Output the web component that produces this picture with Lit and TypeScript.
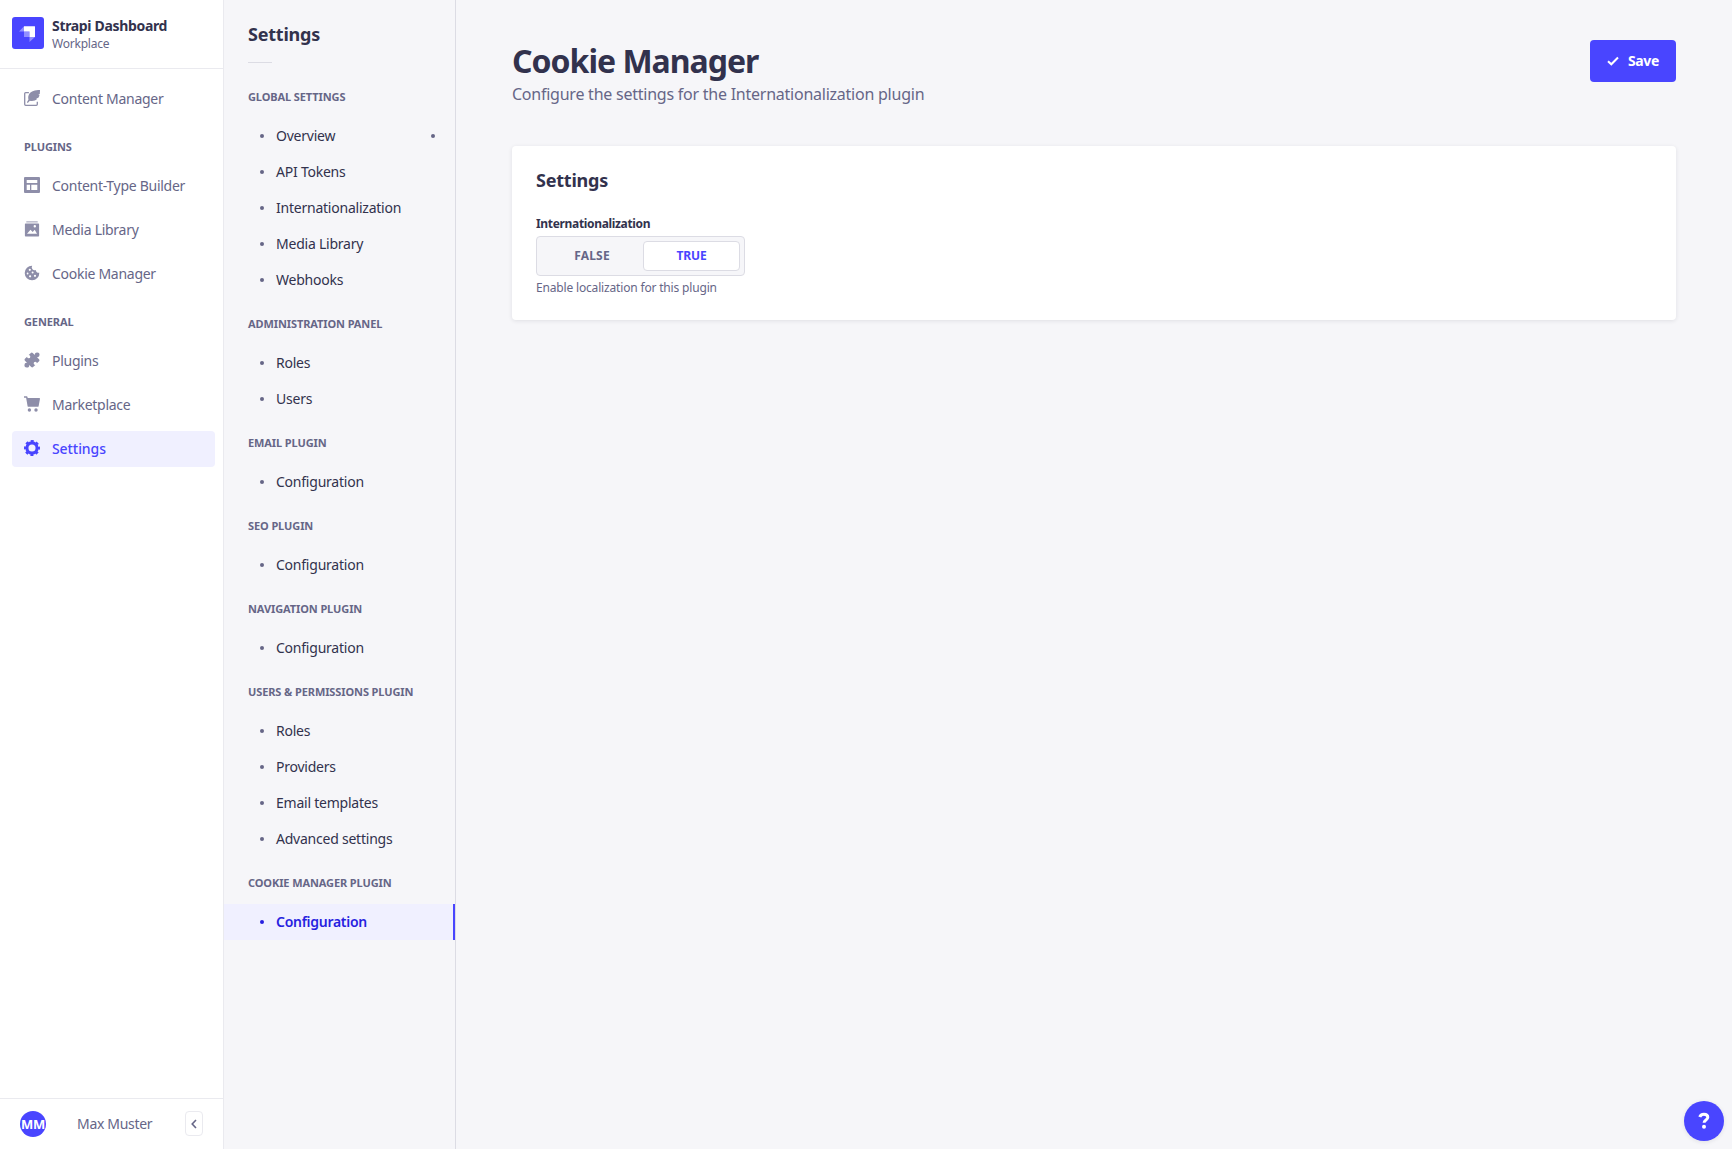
import { LitElement, html, svg, css, nothing } from "lit";
import { customElement } from "lit/decorators.js";
import { classMap } from "lit/directives/class-map.js";

const icons: Record<string, unknown> = {
  write: svg`<path d="M4.900 2.600H1.700a1 1 0 0 0-1 1v10.700a1 1 0 0 0 1 1h10.600a1 1 0 0 0 1-1v-2.600" fill="none" stroke="currentColor" stroke-width="1.300"/>
    <path d="M16 0C11 .1 7 1.200 5.200 4 4.100 5.800 4 7.900 4.500 9.600L2.900 12.300l.9.700 2-2.300c2.700.6 5.700.1 7.500-1.900l-1.300-.4 2.400-.7c.5-.8.900-1.700 1.100-2.700l-1.300-.3 1.600-.7C15.900 2.700 16 1.300 16 0z"/>`,
  layout: svg`<path fill-rule="evenodd" d="M1 0h14a1 1 0 0 1 1 1v14a1 1 0 0 1-1 1H1a1 1 0 0 1-1-1V1a1 1 0 0 1 1-1zm1.700 3v3h10.600V3zm0 4.800V13H6V7.800zm4.600 0V13h6V7.800z"/>`,
  media: svg`<path d="M2.300 0h11.400v1.600H2.300z" opacity=".55"/>
    <path fill-rule="evenodd" d="M1.600 2.600h12.800a.7.700 0 0 1 .7.700v11.400a.7.700 0 0 1-.7.700H1.600a.7.700 0 0 1-.7-.7V3.300a.7.700 0 0 1 .7-.7zM3 12.800h10l-2.300-4-2 2.300-2.200-2.300zM9.600 5.200a1.200 1.200 0 1 0 2.400 0 1.200 1.200 0 1 0-2.400 0z"/>`,
  cookie: svg`<path fill-rule="evenodd" d="M8.200.7a7.300 7.300 0 1 0 7.100 7 2.700 2.700 0 0 1-3.500-2.600A3 3 0 0 1 8.200.7zM4.700 4.800a1.100 1.100 0 1 1 2.200 0 1.100 1.100 0 0 1-2.200 0zM2.700 8.500a.9.900 0 1 1 1.800 0 .9.900 0 0 1-1.800 0zM7.600 7.600a1 1 0 1 1 2 0 1 1 0 0 1-2 0zM5 11.300a1.100 1.100 0 1 1 2.200 0 1.100 1.100 0 0 1-2.200 0zM9.900 10.800a1.100 1.100 0 1 1 2.200 0 1.100 1.100 0 0 1-2.200 0z"/>`,
  puzzle: svg`<path transform="rotate(45 8 8)" d="M3.500 2.500H6.500a2.400 2.400 0 1 1 3 0H12.500q1.300 0 1.300 1.300V6.900a1.600 1.600 0 1 0 0 2.200V12.200q0 1.300-1.300 1.300H9.500a2.400 2.400 0 1 1-3 0H3.500Q2.200 13.500 2.200 12.200V9.100a1.600 1.600 0 1 0 0-2.200V3.800Q2.200 2.500 3.500 2.500z"/>`,
  cart: svg`<path d="M0 .3h2.600c.5 0 .8.300.9.800l.2.900H15.400c.4 0 .7.400.6.800l-1.400 7.400c-.1.400-.4.600-.8.600H4.400a.8.800 0 0 1-.8-.6L2.100 1.700H0z"/><circle cx="5.400" cy="14" r="1.700"/><circle cx="12" cy="14" r="1.700"/>`,
  cog: svg`<circle cx="8" cy="8" r="5.100" fill="none" stroke="currentColor" stroke-width="3.100"/><circle cx="8" cy="8" r="6.900" fill="none" stroke="currentColor" stroke-width="2.200" stroke-dasharray="3 2.419" stroke-dashoffset="1.500"/>`,
};

interface NavItem { label: string; icon: string; active?: boolean }
interface NavGroup { title?: string; items: NavItem[] }

const mainNav: NavGroup[] = [
  { items: [{ label: "Content Manager", icon: "write" }] },
  {
    title: "Plugins",
    items: [
      { label: "Content-Type Builder", icon: "layout" },
      { label: "Media Library", icon: "media" },
      { label: "Cookie Manager", icon: "cookie" },
    ],
  },
  {
    title: "General",
    items: [
      { label: "Plugins", icon: "puzzle" },
      { label: "Marketplace", icon: "cart" },
      { label: "Settings", icon: "cog", active: true },
    ],
  },
];

interface SubItem { label: string; active?: boolean; notice?: boolean }
const subNav: { title: string; items: SubItem[] }[] = [
  {
    title: "Global Settings",
    items: [
      { label: "Overview", notice: true },
      { label: "API Tokens" },
      { label: "Internationalization" },
      { label: "Media Library" },
      { label: "Webhooks" },
    ],
  },
  { title: "Administration Panel", items: [{ label: "Roles" }, { label: "Users" }] },
  { title: "Email Plugin", items: [{ label: "Configuration" }] },
  { title: "SEO Plugin", items: [{ label: "Configuration" }] },
  { title: "Navigation Plugin", items: [{ label: "Configuration" }] },
  {
    title: "Users & Permissions Plugin",
    items: [{ label: "Roles" }, { label: "Providers" }, { label: "Email templates" }, { label: "Advanced settings" }],
  },
  { title: "Cookie Manager Plugin", items: [{ label: "Configuration", active: true }] },
];

const base = css`
  * { box-sizing: border-box; }
  h1, h2, p { margin: 0; }
  svg { display: block; flex: none; }
  .overline { font-size: 11px; line-height: 16px; font-weight: 700; letter-spacing: -.1px; text-transform: uppercase; color: #666687; }
  .title { font-size: 18px; line-height: 22px; font-weight: 700; letter-spacing: -.22px; color: #32324d; }
`;

@customElement("main-nav")
export class MainNav extends LitElement {
  static styles = [base, css`
    :host { display: flex; flex-direction: column; box-sizing: border-box; width: 224px; flex: none; background: #fff; border-right: 1px solid #eaeaef; }
    .brand { display: flex; gap: 8px; height: 69px; padding: 16px 12px 0; border-bottom: 1px solid #eaeaef; }
    .logo { margin-top: 1px; }
    .name { font-size: 14px; line-height: 20px; font-weight: 700; letter-spacing: -.33px; color: #32324d; }
    .place { font-size: 12px; line-height: 16px; letter-spacing: -.22px; color: #666687; }
    .menu { flex: 1; display: flex; flex-direction: column; gap: 22px; padding: 12px 8px 0 12px; }
    .overline { padding-left: 12px; margin-bottom: 13px; }
    .list { display: flex; flex-direction: column; gap: 8px; }
    .item { display: flex; align-items: center; gap: 12px; height: 36px; padding: 0 12px; border-radius: 4px; font-size: 14px; line-height: 20px; letter-spacing: -.28px; color: #666687; }
    .item svg { fill: #8e8ea9; color: #8e8ea9; margin-bottom: 2px; }
    .item.active { background: #f0f0ff; color: #4945ff; font-weight: 500; letter-spacing: -.08px; }
    .item.active svg { fill: #4945ff; color: #4945ff; }
    .user { display: flex; align-items: center; height: 51px; padding: 0 20px; border-top: 1px solid #eaeaef; }
    .avatar { display: flex; align-items: center; justify-content: center; width: 26px; height: 26px; border-radius: 50%; background: #4945ff; color: #fff; font-size: 13px; font-weight: 700; letter-spacing: -.2px; overflow: hidden; }
    .who { flex: 1; padding-left: 31px; font-size: 14px; line-height: 20px; letter-spacing: -.32px; color: #666687; }
    .fold { display: flex; align-items: center; justify-content: center; width: 18px; height: 25px; margin-bottom: 1px; padding: 0; border: 1px solid #eaeaef; border-radius: 4px; background: #fff; }
  `];

  render() {
    return html`
      <div class="brand">
        <svg class="logo" width="32" height="32" viewBox="0 0 32 32">
          <rect width="32" height="32" rx="3" fill="#4945ff"/>
          <path d="M12 9.200H22.600q.4 0 .4.400V19.900H17.500V14.500H12z" fill="#fff"/>
          <path d="M12 14.500h5.500v5.400H12zM12 9.200v5.300H7zM17.500 19.900H23L17.500 25z" fill="#fff" opacity=".4"/>
        </svg>
        <div>
          <div class="name">Strapi Dashboard</div>
          <div class="place">Workplace</div>
        </div>
      </div>
      <nav class="menu">
        ${mainNav.map((group) => html`
          <div>
            ${group.title ? html`<div class="overline">${group.title}</div>` : nothing}
            <div class="list">
              ${group.items.map((item) => html`
                <div class=${classMap({ item: true, active: !!item.active })}>
                  <svg width="16" height="16" viewBox="0 0 16 16">${icons[item.icon]}</svg>
                  <span>${item.label}</span>
                </div>`)}
            </div>
          </div>`)}
      </nav>
      <div class="user">
        <span class="avatar">MM</span>
        <span class="who">Max Muster</span>
        <button class="fold" aria-label="Collapse">
          <svg width="6" height="10" viewBox="0 0 6 10"><path d="M5 1 1.200 5 5 9" fill="none" stroke="#666687" stroke-width="1.600"/></svg>
        </button>
      </div>`;
  }
}

@customElement("settings-nav")
export class SettingsNav extends LitElement {
  static styles = [base, css`
    :host { display: block; box-sizing: border-box; width: 232px; flex: none; padding-top: 23px; background: #f6f6f9; border-right: 1px solid #dcdce4; }
    .title { padding-left: 24px; }
    .rule { width: 24px; height: 1px; margin: 17px 0 26px 24px; background: #dcdce4; }
    .groups { display: flex; flex-direction: column; gap: 18px; }
    .overline { padding-left: 24px; margin-bottom: 13px; }
    .item { display: flex; align-items: center; height: 36px; padding: 0 20px 0 36px; font-size: 14px; line-height: 20px; letter-spacing: -.23px; color: #32324d; }
    .dot { width: 4px; height: 4px; border-radius: 50%; background: #666687; }
    .label { flex: 1; padding-left: 12px; }
    .active { background: #f0f0ff; border-right: 2px solid #4945ff; color: #271fe0; font-weight: 600; letter-spacing: -.28px; }
    .active .dot { background: #271fe0; }
  `];

  render() {
    return html`
      <h2 class="title">Settings</h2>
      <div class="rule"></div>
      <div class="groups">
        ${subNav.map((group) => html`
          <div>
            <div class="overline">${group.title}</div>
            ${group.items.map((item) => html`
              <div class=${classMap({ item: true, active: !!item.active })}>
                <span class="dot"></span>
                <span class="label">${item.label}</span>
                ${item.notice ? html`<span class="dot"></span>` : nothing}
              </div>`)}
          </div>`)}
      </div>`;
  }
}

@customElement("app-root")
export class AppRoot extends LitElement {
  static styles = [base, css`
    :host { display: flex; height: 100vh; overflow: hidden; background: #f6f6f9; font-family: "Noto Sans", "Open Sans", sans-serif; }
    main { flex: 1; padding: 40px 56px 0; }
    header { display: flex; justify-content: space-between; align-items: flex-start; height: 106px; }
    h1 { padding-top: 1px; font-size: 32px; line-height: 40px; font-weight: 700; letter-spacing: -1px; color: #32324d; }
    .lead { margin-top: 1px; font-size: 16px; line-height: 24px; letter-spacing: -.24px; color: #666687; }
    .save { display: flex; align-items: center; gap: 9px; height: 42px; padding: 0 17px; border: 0; border-radius: 4px; background: #4945ff; color: #fff; font: 700 14px/20px "Noto Sans", sans-serif; letter-spacing: -.35px; }
    .card { display: flex; flex-direction: column; align-items: flex-start; height: 174px; padding: 23px 24px 24px; border-radius: 4px; background: #fff; box-shadow: 0 1px 4px rgba(33, 33, 52, .1); }
    .field { margin: 25px 0 4px; font-size: 12px; line-height: 16px; font-weight: 700; letter-spacing: -.33px; color: #32324d; }
    .toggle { display: flex; width: 209px; height: 40px; padding: 4px; border: 1px solid #dcdce4; border-radius: 4px; background: #f6f6f9; }
    .option { display: flex; align-items: center; justify-content: center; width: 102px; padding-bottom: 2px; font-size: 12px; font-weight: 700; letter-spacing: .2px; color: #666687; }
    .option.on { width: 97px; border: 1px solid #dcdce4; border-radius: 4px; background: #fff; color: #4945ff; letter-spacing: -.1px; }
    .hint { margin-top: 4px; font-size: 12px; line-height: 16px; letter-spacing: -.17px; color: #666687; }
    .help { position: absolute; right: 8px; bottom: 8px; display: flex; align-items: center; justify-content: center; width: 40px; height: 40px; padding: 0; border: 0; border-radius: 50%; background: #4945ff; box-shadow: 0 1px 4px rgba(33, 33, 52, .1); }
  `];

  render() {
    return html`
      <main-nav></main-nav>
      <settings-nav></settings-nav>
      <main>
        <header>
          <div>
            <h1>Cookie Manager</h1>
            <p class="lead">Configure the settings for the Internationalization plugin</p>
          </div>
          <button class="save">
            <svg width="12" height="10" viewBox="0 0 12 10"><path d="M1 5.200 4.300 8.300 11 1.500" fill="none" stroke="#fff" stroke-width="2"/></svg>
            <span>Save</span>
          </button>
        </header>
        <section class="card">
          <h2 class="title">Settings</h2>
          <div class="field">Internationalization</div>
          <div class="toggle">
            <span class="option">FALSE</span>
            <span class="option on">TRUE</span>
          </div>
          <p class="hint">Enable localization for this plugin</p>
        </section>
      </main>
      <button class="help" aria-label="Help">
        <svg width="12" height="18" viewBox="0 0 12 18"><path d="M1.800 5C2.300 3.200 3.900 2.300 5.900 2.300c2.300 0 3.900 1.200 3.900 3 0 2.700-3.700 2.700-3.700 5.400" fill="none" stroke="#fff" stroke-width="3"/><circle cx="6" cy="14.800" r="2" fill="#fff"/></svg>
      </button>`;
  }
}
